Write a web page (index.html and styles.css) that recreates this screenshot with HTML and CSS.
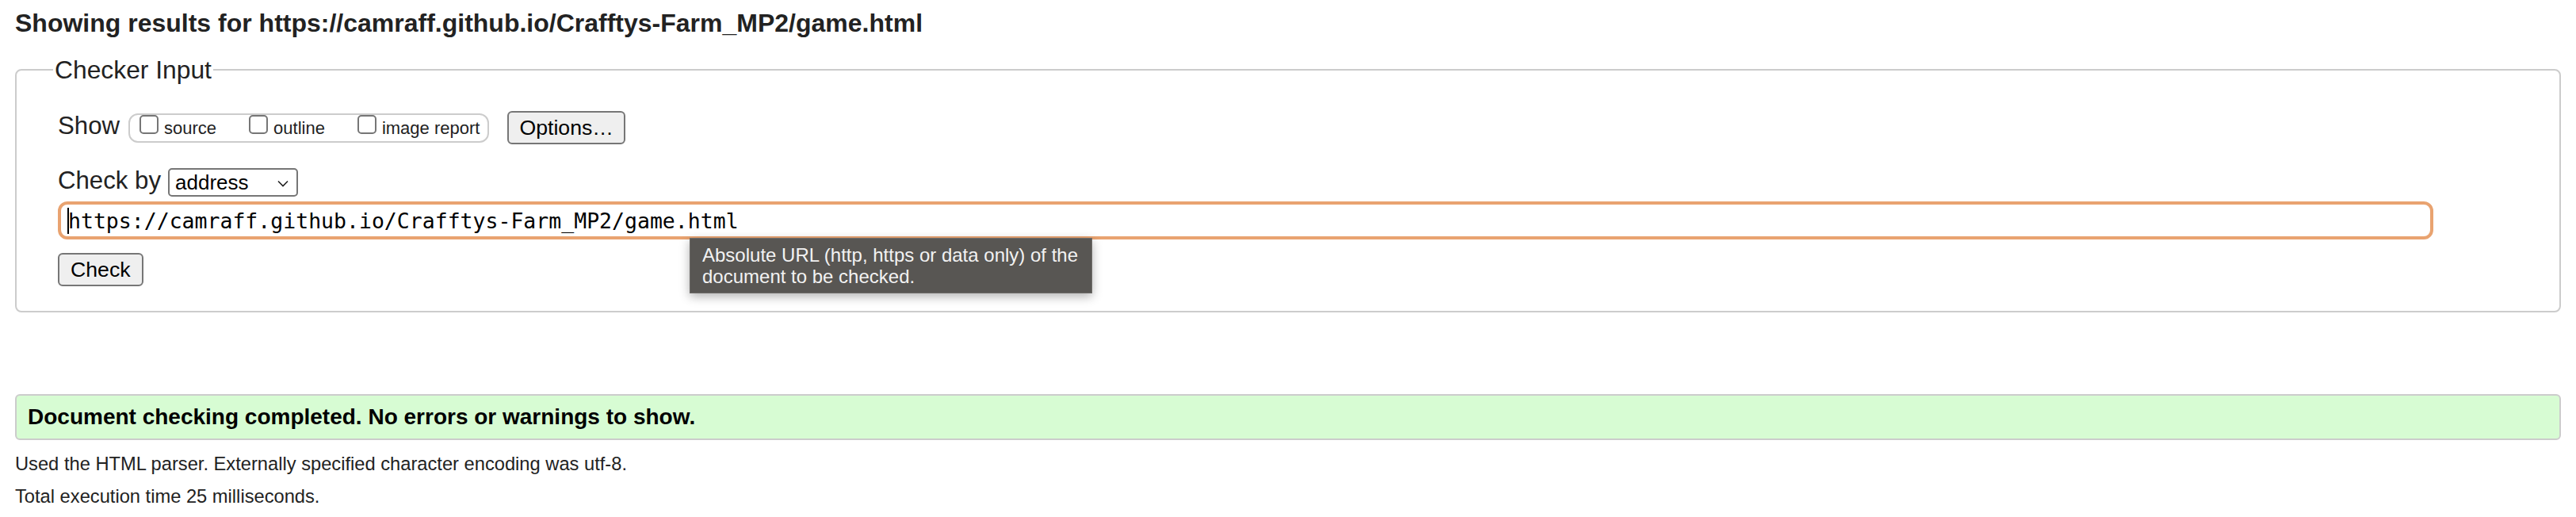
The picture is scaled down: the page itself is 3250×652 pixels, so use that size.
FILE: index.html
```html
<!DOCTYPE html>
<html lang="en">
<head>
<meta charset="utf-8">
<title>Nu Html Checker</title>
<link rel="stylesheet" href="styles.css">
</head>
<body>
<h2 class="title">Showing results for https://camraff.github.io/Crafftys-Farm_MP2/game.html</h2>
<fieldset class="checker">
  <legend class="legend">Checker Input</legend>
  <div class="row row-show">
    <span class="row-label">Show</span>
    <span class="cb-group">
      <label class="cb-item"><input type="checkbox" class="cb"><span class="cb-text">source</span></label>
      <label class="cb-item"><input type="checkbox" class="cb"><span class="cb-text">outline</span></label>
      <label class="cb-item"><input type="checkbox" class="cb"><span class="cb-text">image report</span></label>
    </span>
    <button class="btn btn-options" type="button">Options…</button>
  </div>
  <div class="row row-by">
    <span class="row-label">Check by</span>
    <span class="select">
      <span class="select-text">address</span>
      <svg class="chev" width="14" height="9" viewBox="0 0 14 9"><path d="M1 1.5 L7 7.5 L13 1.5" fill="none" stroke="#222" stroke-width="1.6"/></svg>
    </span>
  </div>
  <div class="url-wrap">
    <input class="url" type="text" value="https://camraff.github.io/Crafftys-Farm_MP2/game.html">
    <span class="caret"></span>
    <div class="tooltip">Absolute URL (http, https or data only) of the<br>document to be checked.</div>
  </div>
  <div class="row row-submit">
    <button class="btn btn-check" type="button">Check</button>
  </div>
</fieldset>
<div class="success">Document checking completed. No errors or warnings to show.</div>
<p class="info">Used the HTML parser. Externally specified character encoding was utf-8.</p>
<p class="info">Total execution time 25 milliseconds.</p>
</body>
</html>
```

FILE: styles.css
```css
* { box-sizing: border-box; }

html, body {
  background: #fff;
}

body {
  margin: 0;
  padding: 13px 19px 0;
  font-family: "Liberation Sans", Arial, Helvetica, sans-serif;
  color: #222;
}

.title {
  margin: 0;
  font-size: 32px;
  line-height: 32px;
  font-weight: bold;
  color: #222;
}

.checker {
  margin: 25px 0 0;
  padding: 34px 0 31px 52px;
  border: 2px solid #ccc;
  border-radius: 8px;
  min-width: 0;
}

.legend {
  margin-left: -6px;
  padding: 0 2px;
  font-size: 31.8px;
  line-height: 36px;
  color: #222;
}

.row {
  display: flex;
  align-items: center;
}

.row-show {
  height: 42px;
}

.row-label {
  font-size: 31.2px;
  line-height: 36px;
  padding-bottom: 4px;
  color: #222;
}

.row-show .row-label {
  margin-right: 11px;
}

.cb-group {
  display: inline-flex;
  align-items: flex-start;
  height: 37px;
  border: 2px solid #ccc;
  border-radius: 12px;
  padding: 0 10px 0 12px;
  gap: 41px;
}

.cb-item {
  display: flex;
  align-items: flex-start;
  gap: 7px;
}

.cb {
  appearance: none;
  -webkit-appearance: none;
  width: 24px;
  height: 24px;
  margin: 0;
  border: 2px solid #767676;
  border-radius: 5px;
  background: #fff;
}

.cb-text {
  font-size: 22px;
  line-height: 28px;
  padding-top: 3px;
  color: #222;
}

.btn {
  height: 42px;
  padding: 0 13px;
  border: 2px solid #767676;
  border-radius: 6px;
  background: #efefef;
  font-family: "Liberation Sans", Arial, sans-serif;
  font-size: 26.67px;
  color: #000;
  line-height: 1;
}

.btn-options {
  margin-left: 23px;
}

.btn-check {
  padding: 0 14px;
}

.row-by {
  margin-top: 30px;
  height: 36px;
}

.row-by .row-label {
  margin-right: 9px;
}

.select {
  display: flex;
  align-items: center;
  justify-content: space-between;
  width: 164px;
  height: 36px;
  border: 2px solid #767676;
  border-radius: 5px;
  padding: 0 10px 0 7px;
  background: #fff;
}

.select-text {
  font-size: 26px;
  color: #000;
}

.chev {
  display: block;
  margin-top: 2px;
}

.url-wrap {
  position: relative;
  margin-top: 6px;
  width: 2997px;
}

.url {
  display: block;
  width: 100%;
  height: 48px;
  margin: 0;
  border: 4px solid #e9a370;
  border-radius: 12px;
  padding: 0 0 0 9px;
  font-family: "DejaVu Sans Mono", "Liberation Mono", monospace;
  font-size: 26.5px;
  color: #000;
  background: #fff;
  outline: none;
}

.caret {
  position: absolute;
  left: 12px;
  top: 8px;
  width: 2px;
  height: 33px;
  background: #000;
}

.tooltip {
  position: absolute;
  left: 797px;
  top: 46px;
  width: 508px;
  padding: 7px 15px;
  background: #585653;
  border: 1px solid #6d6b68;
  color: #f2f2f2;
  font-size: 24px;
  line-height: 27px;
  box-shadow: 0 4px 12px rgba(0, 0, 0, 0.3);
  z-index: 2;
}

.row-submit {
  margin-top: 17px;
}

.success {
  margin-top: 103px;
  height: 58px;
  border: 2px solid #ccc;
  border-radius: 6px;
  background: #d7fcd3;
  padding: 0 14px;
  font-size: 28px;
  font-weight: bold;
  line-height: 54px;
  color: #000;
}

.info {
  margin: 15px 0 0;
  font-size: 23.7px;
  line-height: 30px;
  color: #222;
}

.info + .info {
  margin-top: 11px;
}
```
